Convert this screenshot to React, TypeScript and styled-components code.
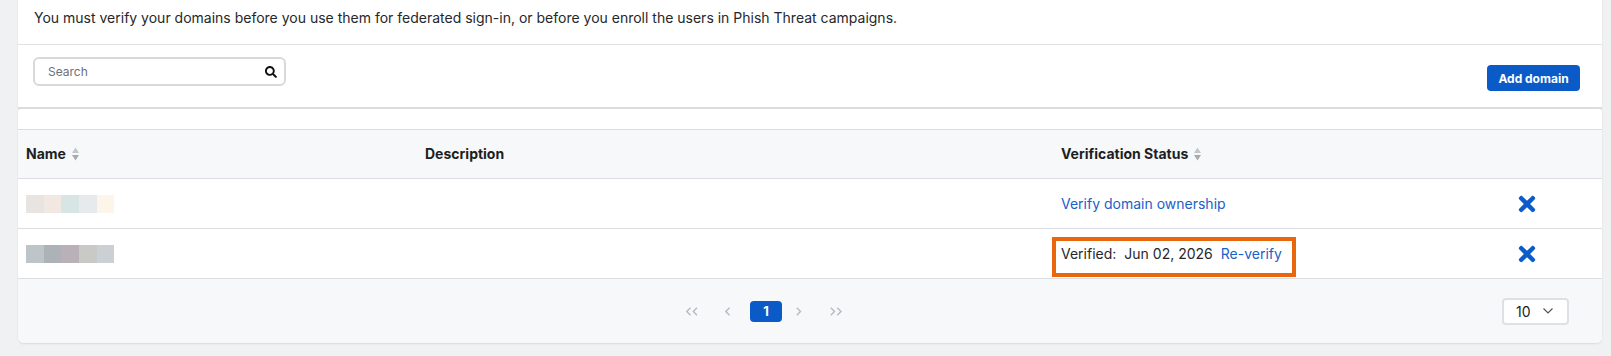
import React from 'react';
import styled, { createGlobalStyle } from 'styled-components';
import { FaSearch, FaTimes } from 'react-icons/fa';

const GlobalStyle = createGlobalStyle`
  html, body { margin: 0; padding: 0; background: #f0f1f3; }
  body { font-family: Inter, "Noto Sans", sans-serif; color: #222326; }
  * { box-sizing: border-box; }
`;

const Page = styled.div`
  padding: 0 9px 13px 18px;
  height: 356px;
`;

const TopCard = styled.section`
  background: #fff;
  box-shadow: 0 0 2px rgba(0, 0, 0, 0.08);
`;

const Notice = styled.p`
  margin: 0;
  padding: 8px 16px 16px;
  font-size: 14px;
  line-height: 20px;
  color: #26272b;
  border-bottom: 1px solid #e1e2e5;
`;

const Toolbar = styled.div`
  display: flex;
  justify-content: space-between;
  align-items: flex-start;
  height: 64px;
  padding: 12px 22px 0 15px;
  border-bottom: 2px solid #dcdde1;
`;

const SearchBox = styled.label`
  display: flex;
  align-items: center;
  width: 253px;
  height: 29px;
  padding: 0 7px 0 13px;
  border: 2px solid #d8d9dd;
  border-radius: 6px;
  color: #111;
`;

const SearchInput = styled.input`
  flex: 1;
  border: 0;
  outline: none;
  background: transparent;
  font-family: inherit;
  font-size: 12px;
  color: #222;
  padding: 0;
  &::placeholder { color: #6d7077; }
`;

const PrimaryButton = styled.button`
  margin-top: 8px;
  height: 26px;
  width: 93px;
  border: 0;
  border-radius: 4px;
  background: #0a5bc8;
  color: #fff;
  font-family: inherit;
  font-size: 12px;
  font-weight: 700;
  cursor: pointer;
`;

const TableCard = styled.section`
  background: #fff;
  padding-top: 20px;
  border-radius: 4px 4px 6px 6px;
  box-shadow: 0 1px 2px rgba(0, 0, 0, 0.1);
`;

const Row = styled.div<{ $head?: boolean }>`
  display: grid;
  grid-template-columns: 399px 636px 1fr 120px;
  padding-right: 15px;
  height: 50px;
  background: ${p => (p.$head ? '#f7f8fa' : '#fff')};
  border-top: ${p => (p.$head ? '1px solid #dcdde1' : '0')};
  border-bottom: 1px solid #dcdde1;
`;

const Cell = styled.div<{ $center?: boolean }>`
  display: flex;
  align-items: center;
  justify-content: ${p => (p.$center ? 'center' : 'flex-start')};
  padding-left: ${p => (p.$center ? '0' : '8px')};
  font-size: 14px;
  line-height: 20px;
`;

const HeadLabel = styled.span`
  font-size: 14px;
  font-weight: 700;
  color: #1d1e21;
`;

const SortIcon = styled.svg`
  margin-left: 6px;
  width: 7px;
  height: 14px;
`;

const Blur = styled.div`
  display: flex;
  height: 18px;
`;

const Swatch = styled.span<{ $c: string; $w: number }>`
  width: ${p => p.$w}px;
  background: ${p => p.$c};
`;

const Link = styled.a`
  color: #1a60c9;
  text-decoration: none;
  cursor: pointer;
`;

const Status = styled.span`
  position: relative;
  display: inline-flex;
  gap: 8px;
  color: #26272b;
`;

const Highlight = styled.span`
  position: absolute;
  left: -9px;
  right: -14px;
  top: -7px;
  bottom: -13px;
  border: 4px solid #e8660c;
  pointer-events: none;
`;

const DeleteButton = styled.button`
  display: flex;
  align-items: center;
  justify-content: center;
  border: 0;
  background: transparent;
  padding: 0;
  color: #0b5cc8;
  cursor: pointer;
`;

const Footer = styled.div`
  display: flex;
  align-items: center;
  height: 64px;
  padding-right: 33px;
  background: #f7f8fa;
  border-radius: 0 0 6px 6px;
`;

const Pager = styled.nav`
  flex: 1;
  display: flex;
  justify-content: center;
  align-items: center;
  padding-left: 10px;
`;

const PageArrow = styled.button<{ $w: number }>`
  width: ${p => p.$w}px;
  height: 21px;
  display: flex;
  align-items: center;
  justify-content: center;
  border: 0;
  background: transparent;
  color: #b7babf;
  padding: 0;
`;

const PageNumber = styled.button`
  width: 32px;
  height: 21px;
  margin-left: 4px;
  border: 0;
  border-radius: 4px;
  background: #0a5bc8;
  color: #fff;
  font-family: inherit;
  font-size: 13px;
  font-weight: 700;
  padding: 0;
`;

const PageSize = styled.div`
  display: flex;
  align-items: center;
  justify-content: space-between;
  width: 67px;
  height: 27px;
  padding: 0 14px 0 12px;
  background: #fff;
  border: 2px solid #dfe0e3;
  border-radius: 4px;
  font-size: 14px;
  color: #222;
`;

const names = [
  [
    ['#e8e4e1', 18], ['#f0e8e1', 17], ['#d8e5e5', 18], ['#e6eaec', 18], ['#fdf4ea', 17],
  ],
  [
    ['#bec5c8', 18], ['#adb2b8', 17], ['#b9b1b7', 18], ['#c9c9c8', 18], ['#cbd0d5', 17],
  ],
] as [string, number][][];

const Sort = () => (
  <SortIcon viewBox="0 0 7 14">
    <path d="M0 6 L3.5 0.5 L7 6 Z" fill="#c3c5c9" />
    <path d="M0 8 L7 8 L3.5 13.5 Z" fill="#a7aaaf" />
  </SortIcon>
);

const Chevron = ({ dir, double }: { dir: 'l' | 'r'; double?: boolean }) => {
  const w = double ? 12 : 6;
  const pts = (x: number) =>
    dir === 'l' ? `${x + 4.5},0.8 ${x + 0.8},4.5 ${x + 4.5},8.2` : `${x + 0.8},0.8 ${x + 4.5},4.5 ${x + 0.8},8.2`;
  return (
    <svg width={w} height={9} viewBox={`0 0 ${w} 9`} fill="none" stroke="currentColor" strokeWidth="1.4">
      <polyline points={pts(0)} />
      {double && <polyline points={pts(6.5)} />}
    </svg>
  );
};

const Blurred = ({ idx }: { idx: number }) => (
  <Blur>
    {names[idx].map(([c, w], i) => (
      <Swatch key={i} $c={c} $w={w} />
    ))}
  </Blur>
);

export default function App() {
  return (
    <>
      <GlobalStyle />
      <Page>
        <TopCard>
          <Notice>
            You must verify your domains before you use them for federated sign-in, or before you enroll the users in Phish Threat campaigns.
          </Notice>
          <Toolbar>
            <SearchBox>
              <SearchInput placeholder="Search" />
              <FaSearch size={12} />
            </SearchBox>
            <PrimaryButton>Add domain</PrimaryButton>
          </Toolbar>
        </TopCard>
        <TableCard>
          <Row $head>
            <Cell>
              <HeadLabel>Name</HeadLabel>
              <Sort />
            </Cell>
            <Cell>
              <HeadLabel>Description</HeadLabel>
            </Cell>
            <Cell>
              <HeadLabel>Verification Status</HeadLabel>
              <Sort />
            </Cell>
            <Cell />
          </Row>
          <Row>
            <Cell>
              <Blurred idx={0} />
            </Cell>
            <Cell />
            <Cell>
              <Link>Verify domain ownership</Link>
            </Cell>
            <Cell $center>
              <DeleteButton aria-label="Delete">
                <FaTimes size={24} />
              </DeleteButton>
            </Cell>
          </Row>
          <Row>
            <Cell>
              <Blurred idx={1} />
            </Cell>
            <Cell />
            <Cell>
              <Status>
                <span>Verified:</span>
                <span>Jun 02, 2026</span>
                <Link>Re-verify</Link>
                <Highlight />
              </Status>
            </Cell>
            <Cell $center>
              <DeleteButton aria-label="Delete">
                <FaTimes size={24} />
              </DeleteButton>
            </Cell>
          </Row>
          <Footer>
            <Pager>
              <PageArrow $w={36}><Chevron dir="l" double /></PageArrow>
              <PageArrow $w={36}><Chevron dir="l" /></PageArrow>
              <PageNumber>1</PageNumber>
              <PageArrow $w={34}><Chevron dir="r" /></PageArrow>
              <PageArrow $w={40}><Chevron dir="r" double /></PageArrow>
            </Pager>
            <PageSize>
              <span>10</span>
              <svg width="10" height="6" viewBox="0 0 10 6" fill="none" stroke="#555" strokeWidth="1.2">
                <polyline points="0.5,0.5 5,5 9.5,0.5" />
              </svg>
            </PageSize>
          </Footer>
        </TableCard>
      </Page>
    </>
  );
}
